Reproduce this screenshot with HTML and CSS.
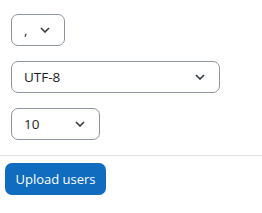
FILE: index.html
```html
<!DOCTYPE html>
<html lang="en">
<head>
  <meta charset="UTF-8">
  <title>Upload users</title>
  <link rel="stylesheet" href="styles.css">
</head>
<body>

<form class="upload-form">
  <div class="field">
    <div class="select-wrap select-delim">
      <select class="custom-select">
        <option>,</option>
        <option>;</option>
        <option>:</option>
        <option>\t</option>
      </select>
      <svg class="chevron" width="10" height="6" viewBox="0 0 10 6"><path d="M1 1l4 4 4-4" fill="none" stroke="#343a40" stroke-width="1.6"/></svg>
    </div>
  </div>

  <div class="field">
    <div class="select-wrap select-encoding">
      <select class="custom-select">
        <option>UTF-8</option>
        <option>ISO-8859-1</option>
      </select>
      <svg class="chevron" width="10" height="6" viewBox="0 0 10 6"><path d="M1 1l4 4 4-4" fill="none" stroke="#343a40" stroke-width="1.6"/></svg>
    </div>
  </div>

  <div class="field">
    <div class="select-wrap select-preview">
      <select class="custom-select">
        <option>10</option>
        <option>20</option>
        <option>100</option>
      </select>
      <svg class="chevron" width="10" height="6" viewBox="0 0 10 6"><path d="M1 1l4 4 4-4" fill="none" stroke="#343a40" stroke-width="1.6"/></svg>
    </div>
  </div>

  <hr class="divider">

  <div class="actions">
    <button type="button" class="btn-primary">Upload users</button>
  </div>
</form>

</body>
</html>
```

FILE: styles.css
```css
body {
  margin: 0;
  font-family: "Open Sans", "Noto Sans", sans-serif;
  background: #fff;
  color: #1d2125;
}
.upload-form {
  padding-top: 14px;
}
.field {
  padding-left: 11px;
  margin-bottom: 15px;
}
.select-wrap {
  position: relative;
  display: inline-block;
}
.custom-select {
  -webkit-appearance: none;
  appearance: none;
  display: block;
  height: 32px;
  padding: 0 28px 0 12px;
  font-family: inherit;
  font-size: 13.5px;
  color: #1d2125;
  background: #fff;
  border: 1px solid #8f959e;
  border-radius: 7px;
  box-sizing: border-box;
}
.select-delim .custom-select {
  width: 54px;
}
.select-encoding .custom-select {
  width: 209px;
}
.select-preview .custom-select {
  width: 89px;
}
.chevron {
  position: absolute;
  right: 15px;
  top: 13px;
  pointer-events: none;
}
.divider {
  margin: 0;
  border: none;
  border-top: 1px solid #dee2e6;
}
.actions {
  padding: 7px 5px;
}
.btn-primary {
  height: 32px;
  width: 101px;
  padding: 0;
  font-family: inherit;
  font-size: 13px;
  color: #fff;
  background: #0f6cbf;
  border: none;
  border-radius: 7px;
  cursor: pointer;
}
```
